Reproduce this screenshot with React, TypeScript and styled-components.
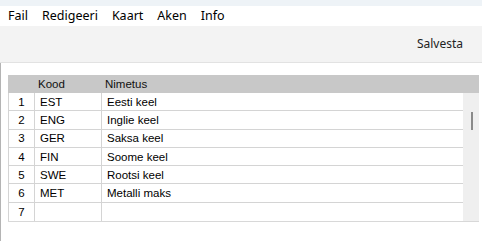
import React from "react";
import styled, { createGlobalStyle } from "styled-components";

const Global = createGlobalStyle`
  html, body { margin: 0; padding: 0; background: #fff; }
  body { width: 482px; height: 241px; overflow: hidden; font-family: "Noto Sans", "Open Sans", sans-serif; }
`;

const Window = styled.div`
  width: 482px;
  height: 241px;
  display: flex;
  flex-direction: column;
  background: #fff;
`;

const TopStrip = styled.div`
  height: 6px;
  background: #eef3f7;
`;

const MenuBar = styled.div`
  height: 20px;
  display: flex;
  align-items: center;
  padding-left: 1px;
  background: #fff;
`;

const MenuItem = styled.span`
  padding: 0 7px;
  font-size: 12.5px;
  color: #000;
  line-height: 20px;
`;

const Toolbar = styled.div`
  height: 36px;
  background: #f3f3f3;
  border-bottom: 1px solid #e2e2e2;
  display: flex;
  align-items: center;
  justify-content: flex-end;
  padding-right: 19px;
`;

const ToolButton = styled.span`
  font-size: 12px;
  color: #222;
  margin-top: -1px;
`;

const Body = styled.div`
  flex: 1;
  border-left: 1px solid #b4b4b4;
  padding: 12px 3px 0 7px;
`;

const Table = styled.div`
  width: 471px;
  display: grid;
  grid-template-columns: 27px 67px 1fr 16px;
  border-bottom: 1px solid #d8d8d8;
  font-family: "Liberation Sans", Arial, sans-serif;
  font-size: 11.5px;
`;

const HeaderCell = styled.div<{ pad?: number }>`
  height: 18px;
  background: #c8c8c8;
  display: flex;
  align-items: center;
  padding-left: ${(p) => p.pad ?? 0}px;
  color: #111;
`;

const Cell = styled.div<{ center?: boolean; last?: boolean }>`
  height: 18.3px;
  box-sizing: border-box;
  display: flex;
  align-items: center;
  justify-content: ${(p) => (p.center ? "center" : "flex-start")};
  padding-left: ${(p) => (p.center ? 0 : 5)}px;
  border-bottom: ${(p) => (p.last ? "none" : "1px solid #d4d4d4")};
  border-right: 1px solid #d4d4d4;
  color: #000;
  white-space: nowrap;
`;

const NumCell = styled(Cell)`
  border-left: 1px solid #d4d4d4;
`;

const NameCell = styled(Cell)`
  border-right: none;
`;

const ScrollTrack = styled.div`
  grid-column: 4;
  grid-row: 2 / span 7;
  background: #efefef;
  position: relative;
`;

const Thumb = styled.div`
  position: absolute;
  left: 8px;
  top: 19px;
  width: 1.5px;
  height: 18px;
  background: #8a8a8a;
`;

const rows: [string, string][] = [
  ["EST", "Eesti keel"],
  ["ENG", "Inglie keel"],
  ["GER", "Saksa keel"],
  ["FIN", "Soome keel"],
  ["SWE", "Rootsi keel"],
  ["MET", "Metalli maks"],
  ["", ""],
];

export default function App() {
  return (
    <Window>
      <Global />
      <TopStrip />
      <MenuBar>
        {["Fail", "Redigeeri", "Kaart", "Aken", "Info"].map((m) => (
          <MenuItem key={m}>{m}</MenuItem>
        ))}
      </MenuBar>
      <Toolbar>
        <ToolButton>Salvesta</ToolButton>
      </Toolbar>
      <Body>
        <Table>
          <HeaderCell />
          <HeaderCell pad={3}>Kood</HeaderCell>
          <HeaderCell pad={3}>Nimetus</HeaderCell>
          <HeaderCell />
          {rows.map(([code, name], i) => (
            <React.Fragment key={i}>
              <NumCell center last={i === rows.length - 1}>{i + 1}</NumCell>
              <Cell last={i === rows.length - 1}>{code}</Cell>
              <NameCell last={i === rows.length - 1}>{name}</NameCell>
            </React.Fragment>
          ))}
          <ScrollTrack>
            <Thumb />
          </ScrollTrack>
        </Table>
      </Body>
    </Window>
  );
}
